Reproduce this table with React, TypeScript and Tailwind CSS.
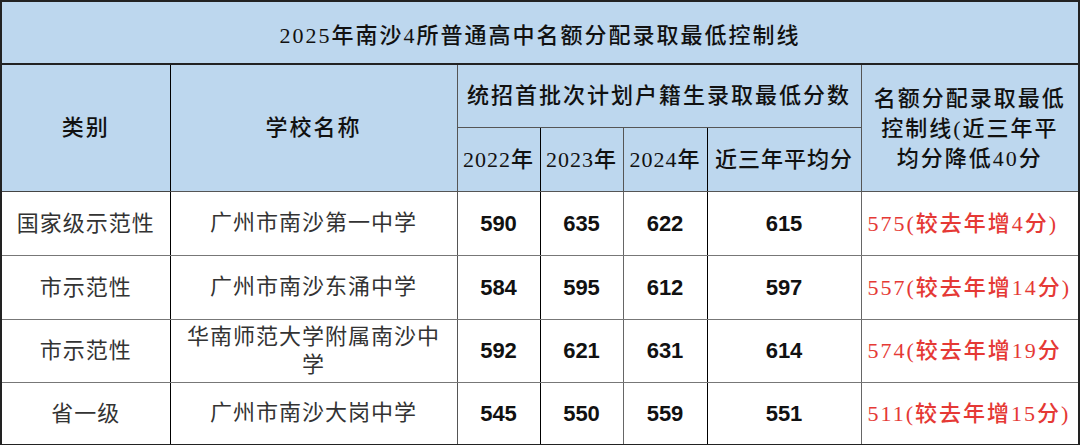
import React from 'react';

const serif = "font-['Liberation_Serif','Noto_Sans_CJK_SC',serif]";
const sans = "font-['Liberation_Sans','Noto_Sans_CJK_SC',sans-serif]";

const rows = [
  { type: '国家级示范性', school: ['广州市南沙第一中学'], s: ['590', '635', '622', '615'], line: '575(较去年增4分)' },
  { type: '市示范性', school: ['广州市南沙东涌中学'], s: ['584', '595', '612', '597'], line: '557(较去年增14分)' },
  { type: '市示范性', school: ['华南师范大学附属南沙中', '学'], s: ['592', '621', '631', '614'], line: '574(较去年增19分' },
  { type: '省一级', school: ['广州市南沙大岗中学'], s: ['545', '550', '559', '551'], line: '511(较去年增15分)' },
];

export default function App() {
  return (
    <div className="w-[1080px] h-[445px] bg-white overflow-hidden">
      <table className="table-fixed border-collapse w-[1079px]">
        <colgroup>
          <col className="w-[169px]" />
          <col className="w-[287px]" />
          <col className="w-[83px]" />
          <col className="w-[83px]" />
          <col className="w-[84px]" />
          <col className="w-[154px]" />
          <col className="w-[218px]" />
        </colgroup>
        <thead>
          <tr className="h-[63px]">
            <td colSpan={7} className={`${serif} bg-[#bdd7ee] border-2 border-[#222] text-center text-[22px] font-medium tracking-[2px] text-[#111] pt-[6px]`}>
              2025年南沙4所普通高中名额分配录取最低控制线
            </td>
          </tr>
          <tr className="h-[63px]">
            <td rowSpan={2} className={`${serif} bg-[#bdd7ee] border border-[#444] border-l-2 border-l-[#222] border-r-black text-center text-[22px] font-medium tracking-[2px] text-[#111]`}>
              类别
            </td>
            <td rowSpan={2} className={`${serif} bg-[#bdd7ee] border border-[#555] text-center text-[22px] font-medium tracking-[2px] text-[#111]`}>
              学校名称
            </td>
            <td colSpan={4} className={`${serif} bg-[#bdd7ee] border border-[#555] text-center text-[22px] font-medium tracking-[2px] text-[#111]`}>
              统招首批次计划户籍生录取最低分数
            </td>
            <td rowSpan={2} className={`${serif} bg-[#bdd7ee] border border-[#555] border-r-2 border-r-[#222] text-center text-[22px] font-medium leading-[30px] tracking-[2px] text-[#111] pt-[2px]`}>
              名额分配录取最低
              <br />
              控制线(近三年平
              <br />
              均分降低40分
            </td>
          </tr>
          <tr className="h-[64px]">
            {['2022年', '2023年', '2024年', '近三年平均分'].map((y, i) => (
              <td
                key={y}
                className={`${serif} bg-[#bdd7ee] border border-[#555] ${i % 2 === 0 ? 'border-r-black' : ''} text-center text-[22px] font-medium tracking-[1px] text-[#111] whitespace-nowrap`}
              >
                {y}
              </td>
            ))}
          </tr>
        </thead>
        <tbody>
          {rows.map((r, idx) => (
            <tr key={idx} className={idx < 2 ? 'h-[64px]' : 'h-[63px]'}>
              <td className={`${sans} border border-[#777] border-l-2 border-l-[#222] border-r-black ${idx === 3 ? 'border-b-2 border-b-[#222]' : ''} text-center text-[22px] tracking-[1px] text-[#333]`}>
                {r.type}
              </td>
              <td className={`${sans} border border-[#777] border-r-[#555] ${idx === 3 ? 'border-b-2 border-b-[#222]' : ''} text-center text-[22px] leading-[28px] tracking-[1px] text-[#333]`}>
                {r.school.map((s, k) => (
                  <React.Fragment key={k}>
                    {k > 0 && <br />}
                    {s}
                  </React.Fragment>
                ))}
              </td>
              {r.s.map((n, i) => (
                <td
                  key={i}
                  className={`${sans} border border-[#777] ${i % 2 === 0 ? 'border-r-black' : 'border-r-[#666]'} ${idx === 3 ? 'border-b-2 border-b-[#222]' : ''} text-center text-[22px] font-bold text-[#111]`}
                >
                  {n}
                </td>
              ))}
              <td className={`${serif} border border-[#777] border-r-2 border-r-[#222] ${idx === 3 ? 'border-b-2 border-b-[#222]' : ''} text-left pl-[6px] text-[22px] font-medium tracking-[2px] text-[#e53935] whitespace-nowrap`}>
                {r.line}
              </td>
            </tr>
          ))}
        </tbody>
      </table>
    </div>
  );
}
